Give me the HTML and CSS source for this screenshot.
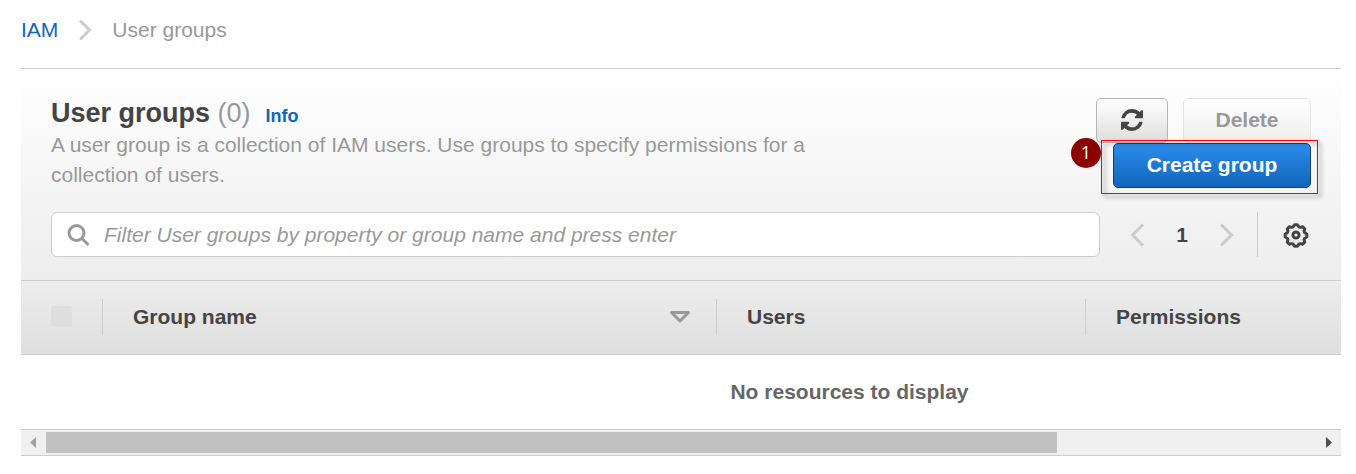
FILE: index.html
```html
<!DOCTYPE html>
<html lang="en">
<head>
<meta charset="utf-8">
<title>User groups</title>
<link rel="stylesheet" href="styles.css">
</head>
<body>
<nav class="breadcrumb" aria-label="Breadcrumb">
  <a href="#iam">IAM</a>
  <svg class="crumb-sep" width="14" height="22" viewBox="0 0 14 22" aria-hidden="true"><path d="M2 1.500 11.500 11 2 20.500"/></svg>
  <span>User groups</span>
</nav>
<main class="panel">
  <header class="panel-head">
    <div class="head-row">
      <div class="head-text">
        <div class="title-row">
          <h1>User groups <span class="count">(0)</span></h1>
          <a class="info" href="#info">Info</a>
        </div>
        <p>A user group is a collection of IAM users. Use groups to specify permissions for a collection of users.</p>
      </div>
      <div class="actions">
        <button class="btn btn-icon" type="button" aria-label="Refresh">
          <svg width="22" height="22" viewBox="0 0 1536 1536" aria-hidden="true"><path fill="#444" d="M1511 928q0 5-1 7-64 268-268 434.500T764 1536q-146 0-282.500-55T238 1324l-129 129q-19 19-45 19t-45-19-19-45V960q0-26 19-45t45-19h448q26 0 45 19t19 45-19 45l-137 137q71 66 161 102t187 36q134 0 250-65t186-179q11-17 53-117 8-23 30-23h192q13 0 22.500 9.500t9.500 22.500zm25-800v448q0 26-19 45t-45 19h-448q-26 0-45-19t-19-45 19-45l138-138Q969 256 768 256q-134 0-250 65T332 500q-11 17-53 117-8 23-30 23H50q-13 0-22.500-9.500T18 608v-7q65-268 270-434.500T768 0q146 0 284 55.500T1297 212l130-129q19-19 45-19t45 19 19 45z"/></svg>
        </button>
        <button class="btn btn-off" type="button" disabled>Delete</button>
        <div class="callout">
          <button class="btn btn-primary" type="button">Create group</button>
          <span class="callout-frame"></span>
          <span class="callout-badge">1</span>
        </div>
      </div>
    </div>
    <div class="tools">
      <div class="search">
        <svg width="24" height="24" viewBox="0 0 24 24" aria-hidden="true"><circle cx="9.500" cy="10" r="7.500"/><path d="m14.500 15 7 7"/></svg>
        <input type="text" aria-label="Filter user groups" placeholder="Filter User groups by property or group name and press enter">
      </div>
      <div class="pager">
        <button class="plain" type="button" aria-label="Previous page"><svg width="15" height="24" viewBox="0 0 15 24"><path d="M13 1.500 2.500 12 13 22.500"/></svg></button>
        <span class="page">1</span>
        <button class="plain" type="button" aria-label="Next page"><svg width="15" height="24" viewBox="0 0 15 24"><path d="M2 1.500 12.500 12 2 22.500"/></svg></button>
      </div>
      <div class="settings">
        <button class="plain gear" type="button" aria-label="Preferences"><svg width="26" height="26" viewBox="0 0 26 26"><path d="M10.200 4.800 11.500 2.700h3l1.300 2.100 1.500.6 2.400-.6 2 2-.6 2.400.6 1.500 2.100 1.300v3l-2.100 1.300-.6 1.500.6 2.400-2 2-2.400-.6-1.500.6-1.300 2.100h-3l-1.300-2.100-1.500-.6-2.400.6-2-2 .6-2.400-.6-1.500-2.100-1.300v-3l2.100-1.300.6-1.500-.6-2.400 2-2 2.400.6z"/><circle cx="13" cy="13" r="3.100"/></svg></button>
      </div>
    </div>
  </header>
  <div class="table-wrap">
    <table>
      <thead>
        <tr>
          <th class="col-check"><div class="cell"><input type="checkbox" aria-label="Select all" disabled></div></th>
          <th class="col-name"><div class="cell">Group name
            <svg width="22" height="14" viewBox="0 0 22 14" aria-hidden="true"><path d="M2.500 2.500h17L11 11z"/></svg></div></th>
          <th class="col-users"><div class="cell">Users</div></th>
          <th><div class="cell">Permissions</div></th>
        </tr>
      </thead>
      <tbody><tr><td colspan="4">No resources to display</td></tr></tbody>
    </table>
  </div>
  <div class="scrollbar" aria-hidden="true">
    <svg width="24" height="21" viewBox="0 0 24 21"><path fill="#a3a3a3" d="M15 5v11L9 10.500z"/></svg>
    <div class="track"><div class="thumb"></div></div>
    <svg width="24" height="21" viewBox="0 0 24 21"><path fill="#505050" d="M9 5v11l6-5.500z"/></svg>
  </div>
</main>
</body>
</html>
```
FILE: styles.css
```css
* { box-sizing: border-box; }
body {
  margin: 0;
  padding: 15px 15px 0 21px;
  background: #fff;
  color: #444;
  font: 21px/30px "Liberation Sans", Arial, sans-serif;
}
button, input { font: inherit; }
svg { display: block; flex: none; }
a { color: #1166bb; text-decoration: none; }

.breadcrumb { display: flex; align-items: center; gap: 20px; color: #999; }
.crumb-sep { fill: none; stroke: #ccc; stroke-width: 3; }

.panel { margin-top: 23px; border-top: 1px solid #ccc; }
.panel-head { padding: 29px 30px 23px; background: linear-gradient(#fff, #ededed); }
.head-row { display: flex; justify-content: space-between; }
.head-text { max-width: 780px; }
.title-row { display: flex; align-items: baseline; gap: 15px; padding-bottom: 2px; }
h1 { margin: 0; font-size: 27px; line-height: 30px; }
.count { color: #999; font-weight: normal; }
.info { font-size: 18px; line-height: 24px; font-weight: bold; }
p { margin: 0; color: #999; }

.actions { display: flex; flex-wrap: wrap; justify-content: flex-end; align-content: flex-start; column-gap: 15px; width: 230px; }
.btn {
  height: 45px;
  padding: 0 30px 2px;
  border: 1px solid #b5b5b5;
  border-radius: 5px;
  background: linear-gradient(#fff, #dedede);
  color: #444;
  font-weight: bold;
  white-space: nowrap;
}
.btn-icon { width: 72px; padding: 0 24px 2px; }
.btn-off { width: 128px; border-color: #e4e4e4; background: linear-gradient(#fff, #ededed); color: #999; }
.btn-primary { width: 198px; border-color: #0c4279; background: linear-gradient(#2d8ceb, #1166bb); color: #fff; }
.callout { position: relative; display: flex; }
.callout-frame {
  position: absolute;
  inset: -3px -7px -6px -12px;
  border: 1px solid #f00;
  filter: drop-shadow(3px 3px 2px rgba(0, 0, 0, .5));
  pointer-events: none;
}
.callout-badge {
  position: absolute;
  left: -42px;
  top: -5px;
  width: 30px;
  height: 30px;
  border-radius: 50%;
  background: #8b0000;
  color: #fff;
  font: 18px/28px "Open Sans", sans-serif;
  text-align: center;
}

.tools { display: flex; height: 45px; margin-top: 22px; }
.search {
  display: flex;
  flex: 1;
  align-items: center;
  gap: 13px;
  padding: 0 15px;
  border: 1px solid #ccc;
  border-radius: 6px;
  background: #fff;
}
.search svg { fill: none; stroke: #999; stroke-width: 3; }
.search input { flex: 1; min-width: 0; padding: 0; border: 0; outline: 0; background: none; color: #444; }
.search input::placeholder { color: #999; opacity: 1; font-style: italic; }
.pager { display: flex; align-items: center; justify-content: space-between; width: 157px; padding: 0 23px 0 30px; }
.plain { padding: 0; border: 0; background: none; }
.plain svg { fill: none; stroke: #ccc; stroke-width: 3; }
.page { font-weight: bold; }
.settings { display: flex; align-items: center; padding: 0 2px 0 25px; border-left: 1px solid #ccc; }
.gear svg { stroke: #444; stroke-linejoin: round; }

.table-wrap { overflow: hidden; }
table { width: 1657px; border-collapse: separate; border-spacing: 0; table-layout: fixed; }
th {
  height: 75px;
  padding: 0 0 2px;
  border: solid #ccc;
  border-width: 1px 0;
  text-align: left;
}
thead { background: linear-gradient(#ededed, #dedede); }
.cell { display: flex; align-items: center; justify-content: space-between; height: 36px; padding: 0 25px 0 30px; }
th + th .cell { border-left: 1px solid #ccc; }
.cell svg { fill: none; stroke: #999; stroke-width: 3; stroke-linejoin: round; }
.col-check { width: 81px; }
.col-name { width: 614px; }
.col-users { width: 369px; }
input[type="checkbox"] { appearance: none; width: 21px; height: 21px; margin: 0; border-radius: 3px; background: #dedede; }
td { height: 74px; padding: 0; color: #666; font-weight: bold; text-align: center; }

.scrollbar { display: flex; align-items: center; height: 27px; border: solid #ccc; border-width: 1px 0; background: #f0f0f0; }
.track { flex: 1; }
.thumb { width: 79.5%; height: 21px; margin-left: 1px; background: #c1c1c1; }
```
